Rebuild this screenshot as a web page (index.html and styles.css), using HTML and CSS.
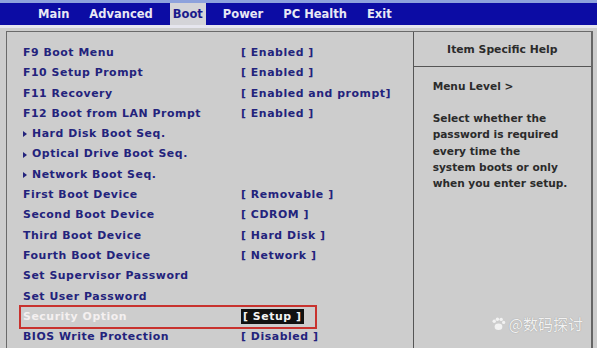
FILE: index.html
```html
<!DOCTYPE html>
<html lang="en">
<head>
    <meta charset="UTF-8">
    <meta name="viewport" content="width=device-width, initial-scale=1.0">
    <title>BIOS Setup - Boot</title>
    <link rel="stylesheet" href="styles.css">
</head>
<body>

    <!-- top menu bar -->
    <div class="menubar">
        <span class="tab">Main</span>
        <span class="tab">Advanced</span>
        <span class="tab active">Boot</span>
        <span class="tab">Power</span>
        <span class="tab">PC Health</span>
        <span class="tab">Exit</span>
    </div>

    <div class="screen">
        <!-- settings list -->
        <div class="settings">
            <div class="row"><span>F9 Boot Menu</span><span>[ Enabled ]</span></div>
            <div class="row"><span>F10 Setup Prompt</span><span>[ Enabled ]</span></div>
            <div class="row"><span>F11 Recovery</span><span>[ Enabled and prompt]</span></div>
            <div class="row"><span>F12 Boot from LAN Prompt</span><span>[ Enabled ]</span></div>
            <div class="row sub"><span><i class="arrow"></i>Hard Disk Boot Seq.</span></div>
            <div class="row sub"><span><i class="arrow"></i>Optical Drive Boot Seq.</span></div>
            <div class="row sub"><span><i class="arrow"></i>Network Boot Seq.</span></div>
            <div class="row"><span>First Boot Device</span><span>[ Removable ]</span></div>
            <div class="row"><span>Second Boot Device</span><span>[ CDROM ]</span></div>
            <div class="row"><span>Third Boot Device</span><span>[ Hard Disk ]</span></div>
            <div class="row"><span>Fourth Boot Device</span><span>[ Network ]</span></div>
            <div class="row"><span>Set Supervisor Password</span></div>
            <div class="row"><span>Set User Password</span></div>
            <div class="row selected"><span>Security Option</span><span class="value">[ Setup ]</span></div>
            <div class="row"><span>BIOS Write Protection</span><span>[ Disabled ]</span></div>
        </div>

        <!-- help panel -->
        <div class="help">
            <div class="help-title">Item Specific Help</div>
            <div class="help-body">
                <p>Menu Level &gt;</p>
                <p>Select whether the<br>password is required<br>every time the<br>system boots or only<br>when you enter setup.</p>
            </div>
        </div>
    </div>

    <!-- watermark -->
    <div class="watermark">
        <svg width="15" height="14" viewBox="0 0 14 13">
            <circle cx="3" cy="4" r="1.6" />
            <circle cx="6" cy="2" r="1.6" />
            <circle cx="9.5" cy="2.2" r="1.6" />
            <circle cx="11.8" cy="5" r="1.5" />
            <ellipse cx="7" cy="9" rx="3.6" ry="3" />
        </svg>
        <span>@数码探讨</span>
    </div>

</body>
</html>
```

FILE: styles.css
```css
body {
    margin: 0;
    width: 597px;
    height: 348px;
    overflow: hidden;
    background-color: #cdcdcd;
    font-family: "DejaVu Sans", Verdana, sans-serif;
    font-weight: bold;
    position: relative;
}

/* top menu bar */
.menubar {
    display: flex;
    gap: 14px;
    height: 22px;
    padding-left: 35px;
    background-color: #0c0ca4;
    border-top: 3px solid #8ea2dc;
    border-bottom: 3px solid #e6e6ee;
    box-sizing: content-box;
}

.tab {
    color: #e8e8f4;
    font-size: 11.5px;
    line-height: 22px;
    padding: 0 3px;
}

.tab.active {
    background-color: #d4d4d8;
    color: #1a1a8c;
}

/* main screen area */
.screen {
    display: flex;
    margin: 3px 4px 0 6px;
    border-top: 1px solid #6a6a6a;
    border-left: 1px solid #6a6a6a;
    height: 320px;
}

.settings {
    width: 393px;
    padding: 11px 0 0 14px;
    border-right: 1px solid #555;
}

.row {
    display: grid;
    grid-template-columns: 218px auto;
    width: 294px;
    padding-left: 2px;
    box-sizing: border-box;
    height: 20.3px;
    line-height: 20.3px;
    font-size: 10.9px;
    letter-spacing: 0.55px;
    color: #23237c;
    white-space: nowrap;
}

.row.sub span {
    display: flex;
    align-items: center;
}

.arrow {
    display: inline-block;
    width: 0;
    height: 0;
    border-top: 3.5px solid transparent;
    border-bottom: 3.5px solid transparent;
    border-left: 4px solid #23237c;
    margin-right: 5px;
}

.row.selected {
    outline: 2px solid #c8322e;
    color: #f4f0f0;
}

.row.selected .value {
    justify-self: start;
    background-color: #111;
    color: #f4f4f4;
    line-height: 15px;
    margin-top: 2px;
    padding: 0 3px 0 2px;
    height: 15px;
}

/* help panel */
.help {
    width: 178px;
    border-right: 2px solid #666;
    color: #2b2b2b;
}

.help-title {
    height: 34px;
    line-height: 36px;
    text-align: center;
    font-size: 10.8px;
    border-bottom: 1px solid #555;
}

.help-body {
    padding: 11px 4px 0 19px;
    font-size: 10.6px;
    line-height: 16.2px;
    white-space: nowrap;
}

.help-body p {
    margin: 0 0 16px 0;
}

/* watermark */
.watermark {
    position: absolute;
    right: 14px;
    bottom: 14px;
    display: flex;
    align-items: center;
    gap: 3px;
    color: #f2f2f2;
    fill: #f2f2f2;
    font-family: "Noto Sans CJK SC", sans-serif;
    font-weight: normal;
    font-size: 15px;
    text-shadow: 0 0 1px #888;
}
```
